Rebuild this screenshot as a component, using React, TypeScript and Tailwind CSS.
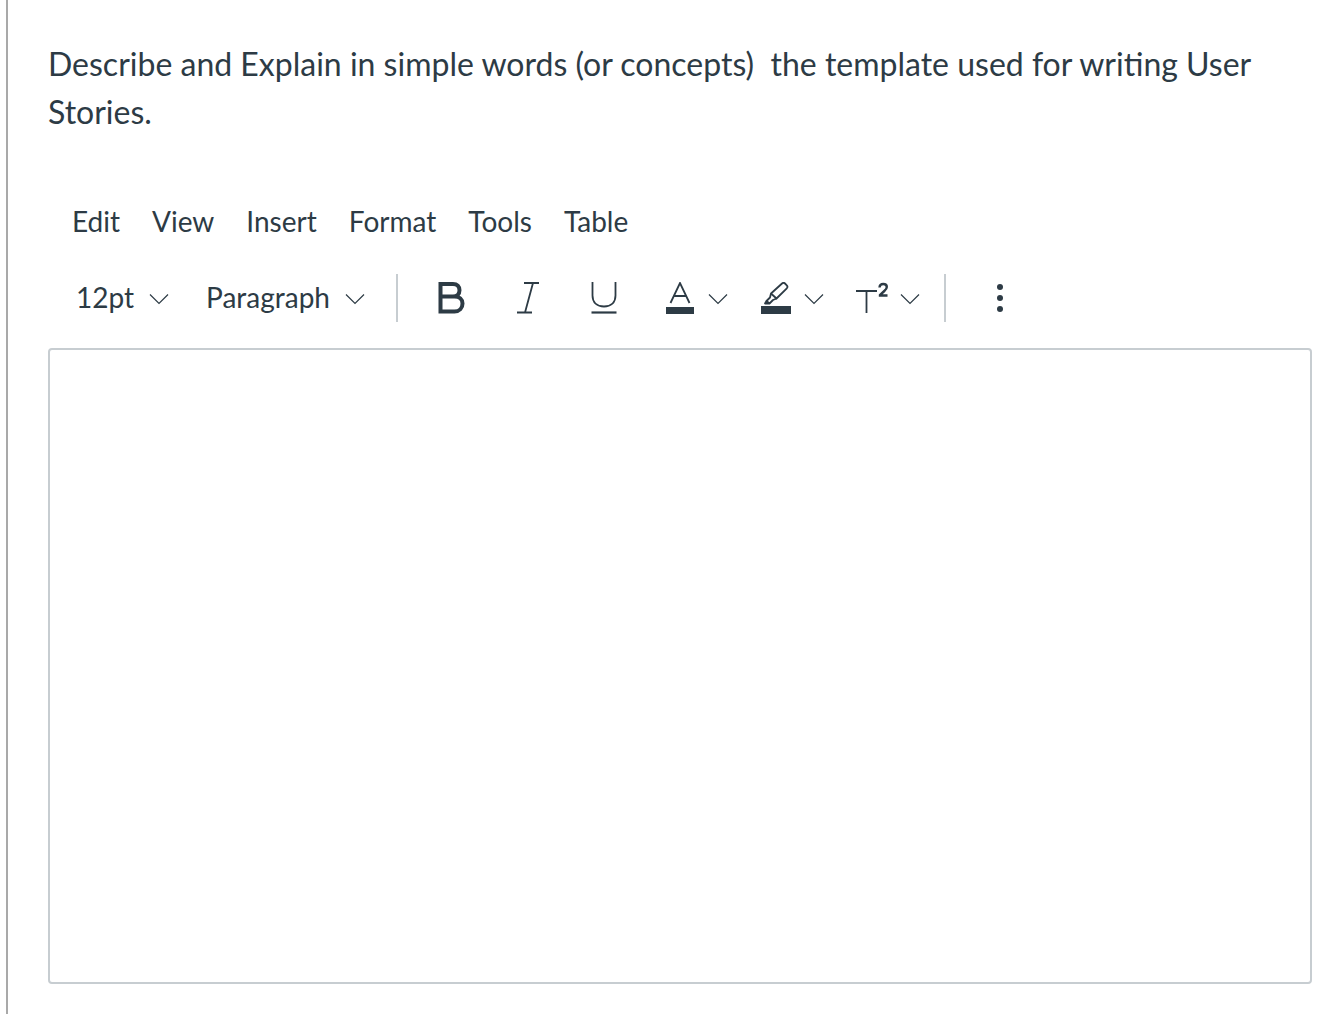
const MENU = ['Edit', 'View', 'Insert', 'Format', 'Tools', 'Table']

function Chevron({ className }: { className?: string }) {
  return (
    <svg width="20" height="12" viewBox="0 0 20 12" fill="none" className={className}>
      <path d="M1 1.5 10 10.5 19 1.5" stroke="#2d3b45" strokeWidth="1.2" />
    </svg>
  )
}

function BoldIcon() {
  return (
    <svg width="27" height="32" viewBox="0 0 27 32" fill="none">
      <path
        d="M2.500 2H15c4.200 0 6.500 2.500 6.500 6.300 0 3.700-2.400 6.200-6.500 6.200H2.500ZM2.500 14.500H16.500c5 0 8 2.800 8 7 0 4.600-3 8-8 8H2.500Z"
        stroke="#2d3b45"
        strokeWidth="4"
      />
    </svg>
  )
}

function ItalicIcon() {
  return (
    <svg width="23" height="32" viewBox="0 0 23 32" fill="none">
      <path d="M7 1h15M0 30.500h15M16 1 8 30.500" stroke="#2d3b45" strokeWidth="1.800" />
    </svg>
  )
}

function UnderlineIcon() {
  return (
    <svg width="26" height="32" viewBox="0 0 26 32" fill="none">
      <path d="M1.500 0v13.500C1.500 20.500 6 24.500 13 24.500s11.500-4 11.500-11V0" stroke="#2d3b45" strokeWidth="1.800" />
      <path d="M0.500 30.500h25" stroke="#2d3b45" strokeWidth="2.200" />
    </svg>
  )
}

function TextColorIcon() {
  return (
    <svg width="28" height="32" viewBox="0 0 28 32" fill="none">
      <path d="M4.500 21 14 1 23.500 21M7.500 14h13" stroke="#2d3b45" strokeWidth="1.800" />
      <rect y="25" width="28" height="7" fill="#2d3b45" />
    </svg>
  )
}

function HighlightIcon() {
  return (
    <svg width="30" height="32" viewBox="0 0 30 32" fill="none">
      <path
        d="M21 1.500c1-.8 2.200-.8 3 0l1.800 1.800c.8.8.8 2 0 3L15.500 16.500l-5.500-5Z"
        stroke="#2d3b45"
        strokeWidth="1.800"
        strokeLinejoin="round"
      />
      <path d="M10 11.500 9 15.500l-3.500 3.500 3 2.500 3.500-3.500 3.500-1.500M5.500 19 4 21.500h4" stroke="#2d3b45" strokeWidth="1.800" strokeLinejoin="round" />
      <rect y="24" width="30" height="8" fill="#2d3b45" />
    </svg>
  )
}

function SuperscriptIcon() {
  return (
    <svg width="33" height="32" viewBox="0 0 33 32" fill="none">
      <path d="M0 9h21M10.500 9v22" stroke="#2d3b45" strokeWidth="1.800" />
      <path
        d="M23.500 5.500c.2-2.500 1.700-3.500 3.700-3.500 2 0 3.600 1.200 3.600 3 0 1.500-.8 2.500-2.500 4L24 13v.5h7.500"
        stroke="#2d3b45"
        strokeWidth="2.400"
      />
    </svg>
  )
}

function Divider() {
  return <div className="h-[48px] w-[2px] bg-[#c7cdd1]" />
}

export default function App() {
  return (
    <div className="h-[1014px] overflow-hidden bg-white font-['Lato','Liberation_Sans',sans-serif] text-[#2d3b45]">
      <div className="ml-[6px] h-full border-l-2 border-[#a9a9a9] pl-[40px] pr-[30px] pt-[40px]">
        <p className="text-[32px] leading-[48px] whitespace-pre-wrap">
          {'Describe and Explain in simple words (or concepts)  the template used for writing User Stories.'}
        </p>

        {/* Menu bar */}
        <div className="mt-[63px] flex h-[44px] items-center gap-[32px] pl-[24px] text-[28px]">
          {MENU.map((item) => (
            <span key={item}>{item}</span>
          ))}
        </div>

        {/* Toolbar */}
        <div className="mt-[31px] flex h-[48px] items-center pl-[28px] text-[28px]">
          <span className="mb-[2px]">12pt</span>
          <Chevron className="ml-[15px] mt-[2px]" />
          <span className="mb-[2px] ml-[37px]">Paragraph</span>
          <Chevron className="ml-[15px] mt-[2px]" />
          <div className="ml-[31px]">
            <Divider />
          </div>
          <div className="ml-[40px]">
            <BoldIcon />
          </div>
          <div className="ml-[52px]">
            <ItalicIcon />
          </div>
          <div className="ml-[51px]">
            <UnderlineIcon />
          </div>
          <div className="ml-[49px]">
            <TextColorIcon />
          </div>
          <Chevron className="ml-[14px] mt-[2px]" />
          <div className="ml-[33px]">
            <HighlightIcon />
          </div>
          <Chevron className="ml-[13px] mt-[2px]" />
          <div className="ml-[32px]">
            <SuperscriptIcon />
          </div>
          <Chevron className="ml-[11px] mt-[2px]" />
          <div className="ml-[24px]">
            <Divider />
          </div>
          <div className="ml-[51px] flex flex-col gap-[5px]">
            <span className="h-[6px] w-[6px] rounded-full bg-[#2d3b45]" />
            <span className="h-[6px] w-[6px] rounded-full bg-[#2d3b45]" />
            <span className="h-[6px] w-[6px] rounded-full bg-[#2d3b45]" />
          </div>
        </div>

        {/* Editor */}
        <div className="mt-[26px] h-[636px] rounded-[4px] border-2 border-[#c7cdd1] bg-white" />
      </div>
    </div>
  )
}
